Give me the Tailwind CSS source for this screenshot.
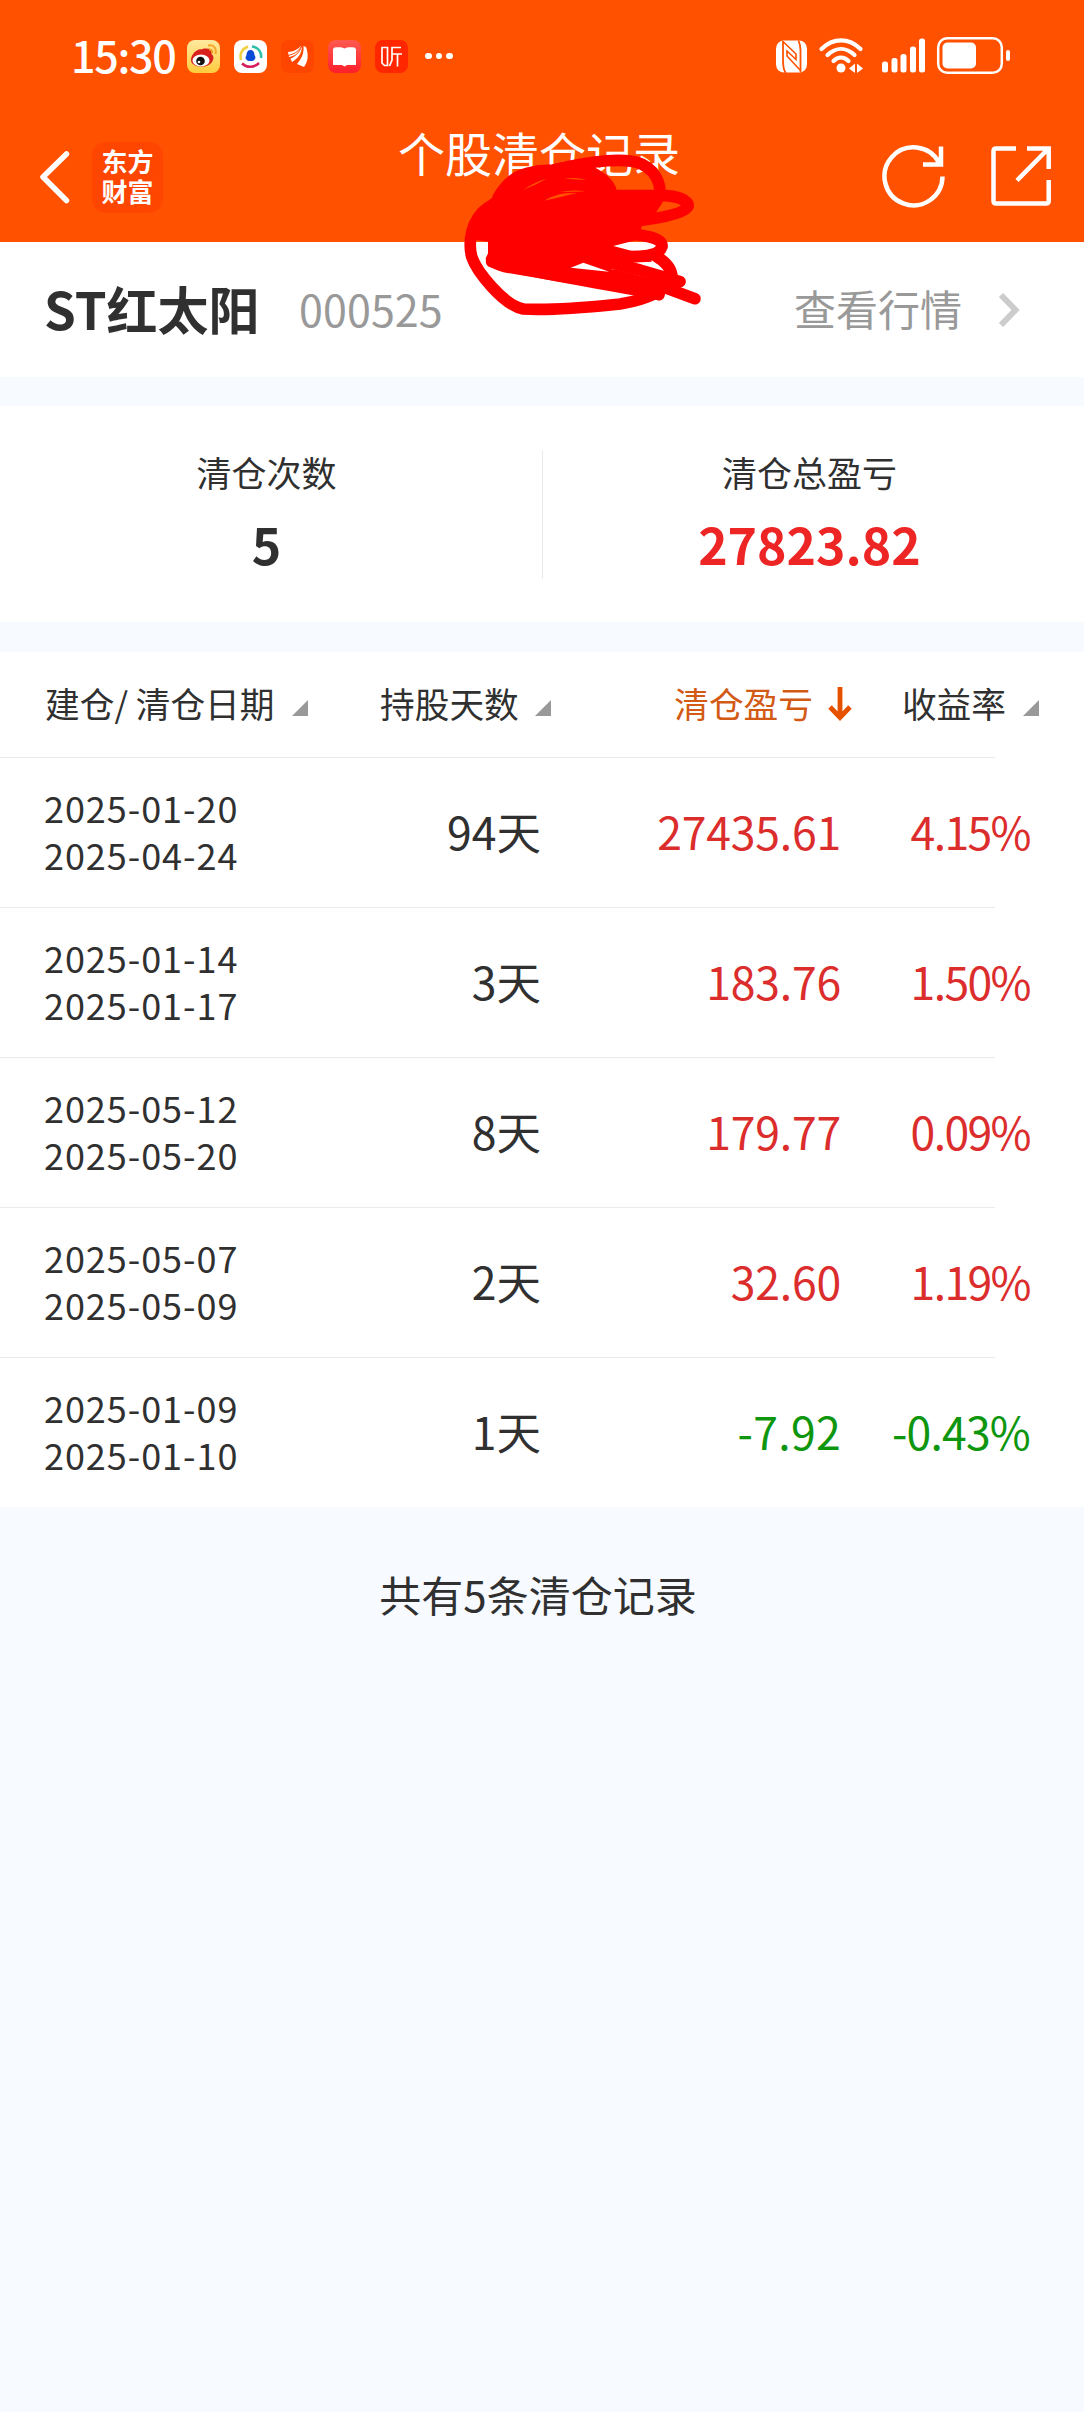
<!DOCTYPE html>
<html lang="zh-CN">
<head>
    <meta charset="UTF-8">
    <meta name="viewport" content="width=device-width, initial-scale=1.0">
    <title>个股清仓记录</title>
    <script src="https://cdn.jsdelivr.net/npm/@tailwindcss/browser@4"></script>
    <style>
        body { font-family: 'Noto Sans CJK SC', sans-serif; }
    </style>
</head>
<body class="bg-[#f7faff] text-[#303030] w-[1084px] min-h-[2412px] overflow-x-hidden">
<header class="relative bg-[#ff5100] text-white">
    <!-- Status bar -->
    <div class="h-[112px] flex items-center pl-[71px] pr-[74px]">
        <span class="text-[43px] leading-none font-medium w-[116px] pb-1 whitespace-nowrap tracking-[-1.300px]">15:30</span>
        <div class="flex items-center gap-[14px]">
            <svg class="size-[33px]" viewBox="0 0 33 33">
                <defs><linearGradient id="wb" x1="0" y1="0" x2="0" y2="1"><stop offset="0" stop-color="#ffe9a0"/><stop offset="1" stop-color="#ffcb3c"/></linearGradient></defs>
                <rect width="33" height="33" rx="8" fill="url(#wb)"/>
                <path d="M4 20C4 14 11 8 14.500 9.500C16 8 21 8.500 23 9C25 10 25 12 24.500 14C27 16 27 19 25 22C21 29 4 28 4 20Z" fill="#d8201c"/>
                <ellipse cx="14" cy="20.500" rx="8.500" ry="6" fill="#fff"/>
                <circle cx="13.500" cy="21" r="4.300" fill="#111"/>
                <circle cx="12" cy="22" r="1.300" fill="#fff"/>
                <path d="M21 5.500C26 4 30 8 28.500 14M22 9.500C24.500 9 26 11 25 13" fill="none" stroke="#f5a52a" stroke-width="2"/>
            </svg>
            <svg class="size-[33px]" viewBox="0 0 33 33" fill="none">
                <rect width="33" height="33" rx="8" fill="#fff"/>
                <path d="M14 6.500C8 9 5.500 14 7 20" stroke="#f0d040" stroke-width="2.500"/>
                <path d="M18 6.500C24 7 28 12 27 18" stroke="#2fbfa8" stroke-width="2.500"/>
                <path d="M8 23.500C13 28 20 28 25 23" stroke="#d81e5a" stroke-width="2.500"/>
                <path d="M16.500 10C19 10 20.500 12 20.500 15C22 17.500 21.500 19 20.500 19.500C20 21.500 13 21.500 12.500 19.500C11.500 19 11 17.500 12.500 15C12.500 12 14 10 16.500 10Z" fill="#0b4bd8"/>
            </svg>
            <svg class="size-[33px]" viewBox="0 0 33 33">
                <rect width="33" height="33" rx="8" fill="#ff4600"/>
                <path d="M7 12C12 12 17 9 20 6C19 12 14 16 8 17Z" fill="#fff"/>
                <path d="M21 6.500C21.500 14 17 19 11 22L9.500 18.500C15 16.500 19 12 21 6.500Z" fill="#fff"/>
                <path d="M22.500 6L25 7C27.500 14 27.500 21 23 27L16 24C21 18 23 13 22.500 6Z" fill="#fff"/>
                <path d="M7 15.500C13 14 17 12 20 7M12 22C18 18 21 13 21.500 7" fill="none" stroke="#ff4600"/>
            </svg>
            <svg class="size-[33px]" viewBox="0 0 33 33">
                <defs><linearGradient id="bk" x1="0" y1="0" x2="0" y2="1"><stop offset="0" stop-color="#ff5a50"/><stop offset="1" stop-color="#ff1f2b"/></linearGradient></defs>
                <rect width="33" height="33" rx="8" fill="url(#bk)"/>
                <path d="M5 9L6.500 7.500C11 7 14 7 16.500 8.500C19 7 22 7 26.500 7.500L28 9V25H19L16.500 26.500L14 25H5Z" fill="#fff"/>
            </svg>
            <svg class="size-[33px]" viewBox="0 0 33 33" fill="none" stroke="#fff" stroke-width="1.700">
                <rect width="33" height="33" rx="8" fill="#ff2600" stroke="none"/>
                <path d="M7 7.500H12.500V25.500H9.500L7 23ZM26 7.500H17V20L14.500 26M17 14H27M22.500 14V26.500"/>
            </svg>
        </div>
        <div class="flex gap-[4px] ml-[17px]">
            <i class="size-[6.500px] rounded-full bg-white"></i>
            <i class="size-[6.500px] rounded-full bg-white"></i>
            <i class="size-[6.500px] rounded-full bg-white"></i>
        </div>
        <svg class="ml-auto w-[234px] h-[40px]" viewBox="776 36 234 40" fill="#fff">
            <!-- NFC -->
            <rect x="776" y="40.500" width="31" height="32" rx="8"/>
            <path d="M783 41V60C783 67 784 71 786 73M798.500 40.500C800 44 800.500 47 800.500 50V72" fill="none" stroke="#ff5100" stroke-width="1.800"/>
            <path d="M783.500 42L796 54V59.500L787 51V56L800 70" fill="none" stroke="#ff5100" stroke-width="1.600"/>
            <!-- Wi-Fi -->
            <g fill="none" stroke="#fff" stroke-width="4.200" stroke-linecap="round">
                <path d="M821.500 49C833 37.500 849 37.500 860.500 49"/>
                <path d="M827.500 55C836 47 846 47 854.500 55"/>
                <path d="M833.500 61C838 56.500 844 56.500 848.500 61"/>
            </g>
            <circle cx="841" cy="68" r="4.500"/>
            <path d="M849 68.500L855 63.500V73ZM863 68.500L857 63.500V73Z"/>
            <!-- Signal -->
            <rect x="882" y="61.500" width="6" height="11" rx="2.500"/>
            <rect x="891.500" y="58" width="6" height="14.500" rx="2.500"/>
            <rect x="900.500" y="54" width="6" height="18.500" rx="2.500"/>
            <rect x="910" y="46.500" width="6" height="26" rx="2.500"/>
            <rect x="919" y="38.500" width="6" height="34" rx="2.500"/>
            <!-- Battery -->
            <rect x="938.200" y="38.200" width="63.600" height="34.600" rx="9" fill="none" stroke="#fff" stroke-width="2.500"/>
            <rect x="942.500" y="42.500" width="33.500" height="26" rx="5"/>
            <rect x="1006" y="50" width="4" height="11" rx="2"/>
        </svg>
    </div>
    <!-- Nav bar -->
    <div class="h-[130px] flex items-center justify-between pl-[38px] pr-[31px]">
        <div class="flex items-center w-[360px]">
            <svg class="w-[34px] h-[56px]" viewBox="38 149 34 56" fill="none" stroke="#fff" stroke-width="5.500" stroke-linecap="round" stroke-linejoin="round"><path d="M66.500 154L43 177L66.500 200.500"/></svg>
            <div class="ml-[20px] size-[71px] rounded-[14px] bg-[#ff4600] flex flex-col items-center justify-center font-['Liberation_Sans','Noto_Sans_CJK_SC',sans-serif] text-[26px] leading-[30px] font-bold pt-[2px]">
                <span>东方</span>
                <span>财富</span>
            </div>
        </div>
        <h1 class="self-start mt-[17px] text-[47px] leading-[46px] whitespace-nowrap">个股清仓记录</h1>
        <div class="w-[373px] flex justify-end gap-[43px]">
            <svg class="w-[64px] h-[64px]" viewBox="881 145 64 64" fill="none" stroke="#fff" stroke-width="4.500">
                <path d="M941.500 176.500A29 29 0 1 1 938 162.500M940 146.500V164.500H922"/>
            </svg>
            <svg class="w-[64px] h-[64px]" viewBox="988 145 64 64" fill="none" stroke="#fff" stroke-width="4.500" stroke-linejoin="round">
                <path d="M1015 148.500H995Q992.500 148.500 992.500 151V201Q992.500 203.500 995 203.500H1045Q1047.700 203.500 1047.700 201V180"/>
                <path d="M1026 148.500H1047.700V169M1047 149L1016 180.500" stroke-linejoin="miter"/>
            </svg>
        </div>
    </div>
    <!-- Marker scribble -->
    <svg class="absolute left-[380px] top-[110px] w-[340px] h-[220px]" viewBox="0 0 1020 660" fill="none" stroke="#ff0000" stroke-width="35" stroke-linecap="round" stroke-linejoin="round">
        <path stroke="none" fill="#ff0000" fill-rule="evenodd" d="M290 300L338 262C360 215 410 175 480 165L640 170C680 190 705 215 710 240L830 242L848 258L830 305L785 350L770 390L700 408L810 437L815 455L710 460L690 486L610 458L572 473L694 486L760 520V548L540 515L370 487C330 475 318 465 317 445L324 430V395L285 390ZM428 240Q465 215 500 206Q465 226 428 240ZM493 272Q520 255 555 250L590 249Q540 262 493 272ZM553 206Q590 200 620 210Q590 208 553 206ZM540 246Q580 238 617 244Q580 247 540 246Z"/>
        <path d="M325 292C270 330 265 400 275 440C290 485 370 585 430 597C520 603 640 590 720 582C790 570 830 550 850 535"/>
        <path d="M355 262C395 190 450 182 520 180C640 150 740 142 785 162C840 190 845 240 835 262C825 290 800 310 780 330"/>
        <path d="M700 257H860C912 262 932 280 922 292C905 315 820 330 700 340"/>
        <path d="M720 370C830 375 852 395 845 412C835 440 790 440 700 440"/>
        <path d="M830 440C865 460 878 485 876 510"/>
        <path d="M620 440L780 480L900 515"/>
        <path d="M700 495L860 535L945 566"/>
        <path d="M335 455C450 490 740 530 837 554M720 515L837 554"/>
    </svg>
</header>

<!-- Stock -->
<section class="bg-white h-[135px] flex items-center pl-[44px] pr-[63px] pb-[3px]">
    <h2 class="text-[51px] leading-none font-bold whitespace-nowrap w-[255px]">ST红太阳</h2>
    <span class="text-[43px] leading-none text-[#999] tracking-[0.100px]">000525</span>
    <span class="ml-auto text-[42px] leading-none text-[#999]">查看行情</span>
    <svg class="ml-[35px] mt-[3px] w-[24px] h-[40px]" viewBox="0 0 24 40" fill="none" stroke="#ccc" stroke-width="6"><path d="M4 5L18.500 20L4 35"/></svg>
</section>

<!-- Summary -->
<section class="bg-white mt-[29px] h-[216px] flex items-center">
    <div class="w-[542px] pr-[9px] pb-[5px] flex flex-col items-center">
        <span class="text-[35px] leading-[48px]">清仓次数</span>
        <span class="mt-[14px] text-[50px] leading-[66px] font-bold">5</span>
    </div>
    <div class="w-px h-[129px] bg-[#ebebeb]"></div>
    <div class="w-[541px] pr-[8px] pb-[5px] flex flex-col items-center">
        <span class="text-[35px] leading-[48px]">清仓总盈亏</span>
        <span class="mt-[14px] text-[50px] leading-[66px] font-bold text-[#ee2525]">27823.82</span>
    </div>
</section>

<!-- Records -->
<section class="bg-white mt-[30px] h-[855px]">
    <div class="h-[105px] flex items-center pb-[3px] text-[34.700px] leading-none whitespace-nowrap">
        <div class="w-[335px] pl-[45px] flex items-center justify-between pr-[27px]">
            <span>建仓/ 清仓日期</span>
            <svg class="mt-[10px] size-[16px]" viewBox="0 0 16 16"><path d="M16 0V16H0Z" fill="#999"/></svg>
        </div>
        <div class="w-[216px] pl-[45px] flex items-center justify-between">
            <span>持股天数</span>
            <svg class="mt-[10px] size-[16px]" viewBox="0 0 16 16"><path d="M16 0V16H0Z" fill="#999"/></svg>
        </div>
        <div class="w-[301px] flex items-center justify-end gap-[15px] text-[#d25a14]">
            <span>清仓盈亏</span>
            <svg class="mt-[2px] w-[24px] h-[34px]" viewBox="0 0 24 34" fill="none" stroke="#e65100" stroke-width="4.800"><path d="M12 0V30M2 20L12 30.500L22 20"/></svg>
        </div>
        <div class="w-[187px] flex items-center justify-end gap-[17px]">
            <span>收益率</span>
            <svg class="mt-[10px] size-[16px]" viewBox="0 0 16 16"><path d="M16 0V16H0Z" fill="#999"/></svg>
        </div>
    </div>

    <div class="w-[995px] h-px bg-[#ebebeb]"></div>
    <div class="h-[149px] flex items-center pb-[3px] text-[44.500px] leading-none text-right whitespace-nowrap">
        <div class="w-[300px] pl-[44px] text-left text-[36px] leading-[47px] tracking-[0.950px]"><p>2025-01-20</p><p>2025-04-24</p></div>
        <div class="w-[241px]">94天</div>
        <div class="w-[300px] text-[#dc2d2d] tracking-[-0.200px]">27435.61</div>
        <div class="w-[189px] text-[#dc2d2d] tracking-[-1.600px]">4.15%</div>
    </div>

    <div class="w-[995px] h-px bg-[#ebebeb]"></div>
    <div class="h-[149px] flex items-center pb-[3px] text-[44.500px] leading-none text-right whitespace-nowrap">
        <div class="w-[300px] pl-[44px] text-left text-[36px] leading-[47px] tracking-[0.950px]"><p>2025-01-14</p><p>2025-01-17</p></div>
        <div class="w-[241px]">3天</div>
        <div class="w-[300px] text-[#dc2d2d] tracking-[-0.200px]">183.76</div>
        <div class="w-[189px] text-[#dc2d2d] tracking-[-1.600px]">1.50%</div>
    </div>

    <div class="w-[995px] h-px bg-[#ebebeb]"></div>
    <div class="h-[149px] flex items-center pb-[3px] text-[44.500px] leading-none text-right whitespace-nowrap">
        <div class="w-[300px] pl-[44px] text-left text-[36px] leading-[47px] tracking-[0.950px]"><p>2025-05-12</p><p>2025-05-20</p></div>
        <div class="w-[241px]">8天</div>
        <div class="w-[300px] text-[#dc2d2d] tracking-[-0.200px]">179.77</div>
        <div class="w-[189px] text-[#dc2d2d] tracking-[-1.600px]">0.09%</div>
    </div>

    <div class="w-[995px] h-px bg-[#ebebeb]"></div>
    <div class="h-[149px] flex items-center pb-[3px] text-[44.500px] leading-none text-right whitespace-nowrap">
        <div class="w-[300px] pl-[44px] text-left text-[36px] leading-[47px] tracking-[0.950px]"><p>2025-05-07</p><p>2025-05-09</p></div>
        <div class="w-[241px]">2天</div>
        <div class="w-[300px] text-[#dc2d2d] tracking-[-0.200px]">32.60</div>
        <div class="w-[189px] text-[#dc2d2d] tracking-[-1.600px]">1.19%</div>
    </div>

    <div class="w-[995px] h-px bg-[#ebebeb]"></div>
    <div class="h-[149px] flex items-center pb-[3px] text-[44.500px] leading-none text-right whitespace-nowrap">
        <div class="w-[300px] pl-[44px] text-left text-[36px] leading-[47px] tracking-[0.950px]"><p>2025-01-09</p><p>2025-01-10</p></div>
        <div class="w-[241px]">1天</div>
        <div class="w-[300px] text-[#0f960f] tracking-[0.300px]">-7.92</div>
        <div class="w-[189px] text-[#0f960f] tracking-[-0.800px]">-0.43%</div>
    </div>
</section>

<p class="mt-[66px] pr-[8px] text-center text-[42px] leading-[42px]">共有5条清仓记录</p>
</body>
</html>
